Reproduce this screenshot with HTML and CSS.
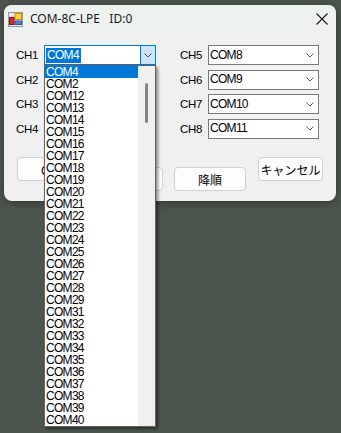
FILE: index.html
```html
<!DOCTYPE html>
<html lang="ja">
<head>
    <meta charset="UTF-8">
    <meta name="viewport" content="width=device-width, initial-scale=1.0">
    <title>COM-8C-LPE</title>
    <link rel="stylesheet" href="styles.css">
</head>
<body>
    <div class="window">
        <div class="titlebar">
            <svg class="app-icon" width="15" height="15" viewBox="0 0 15 15">
                <rect x="0.5" y="0.5" width="14" height="14" fill="#e8e8e8" stroke="#9a9a9a"/>
                <rect x="7" y="1.5" width="6.5" height="6" fill="#ffd83a" stroke="#d08a10"/>
                <rect x="1.5" y="5.5" width="4.5" height="7" fill="#d8262c" stroke="#8a1a1a"/>
                <rect x="7" y="9" width="6.5" height="3.5" fill="#4a86d8" stroke="#2a5aa8"/>
            </svg>
            <span class="title">COM-8C-LPE&nbsp;&nbsp;&nbsp;ID:0</span>
            <svg class="close" width="12" height="12" viewBox="0 0 12 12">
                <path d="M0.5 0.5 L11.5 11.5 M11.5 0.5 L0.5 11.5" stroke="#1a1a1a" stroke-width="1.1"/>
            </svg>
        </div>

        <div class="content">
            <div class="channels">
                <div class="channel">
                    <span class="ch-label">CH1</span>
                    <div class="combo focused">
                        <span class="combo-text"><span class="selected">COM4</span></span>
                        <span class="combo-btn">
                            <svg width="8" height="5" viewBox="0 0 8 5"><polyline points="0.5,0.5 4,4 7.5,0.5" fill="none" stroke="#505050"/></svg>
                        </span>
                        <div class="droplist">
                            <ul class="items" id="items"></ul>
                            <div class="scrollbar"><div class="thumb"></div></div>
                        </div>
                    </div>
                </div>
                <div class="channel">
                    <span class="ch-label">CH5</span>
                    <div class="combo">
                        <span class="combo-text">COM8</span>
                        <span class="combo-btn">
                            <svg width="8" height="5" viewBox="0 0 8 5"><polyline points="0.5,0.5 4,4 7.5,0.5" fill="none" stroke="#606060"/></svg>
                        </span>
                    </div>
                </div>
                <div class="channel">
                    <span class="ch-label">CH2</span>
                    <div class="combo"></div>
                </div>
                <div class="channel">
                    <span class="ch-label">CH6</span>
                    <div class="combo">
                        <span class="combo-text">COM9</span>
                        <span class="combo-btn">
                            <svg width="8" height="5" viewBox="0 0 8 5"><polyline points="0.5,0.5 4,4 7.5,0.5" fill="none" stroke="#606060"/></svg>
                        </span>
                    </div>
                </div>
                <div class="channel">
                    <span class="ch-label">CH3</span>
                    <div class="combo"></div>
                </div>
                <div class="channel">
                    <span class="ch-label">CH7</span>
                    <div class="combo">
                        <span class="combo-text">COM10</span>
                        <span class="combo-btn">
                            <svg width="8" height="5" viewBox="0 0 8 5"><polyline points="0.5,0.5 4,4 7.5,0.5" fill="none" stroke="#606060"/></svg>
                        </span>
                    </div>
                </div>
                <div class="channel">
                    <span class="ch-label">CH4</span>
                    <div class="combo"></div>
                </div>
                <div class="channel">
                    <span class="ch-label">CH8</span>
                    <div class="combo">
                        <span class="combo-text">COM11</span>
                        <span class="combo-btn">
                            <svg width="8" height="5" viewBox="0 0 8 5"><polyline points="0.5,0.5 4,4 7.5,0.5" fill="none" stroke="#606060"/></svg>
                        </span>
                    </div>
                </div>
            </div>

            <div class="buttons">
                <button class="btn btn-first"><span class="hidden-label">C</span></button>
                <button class="btn btn-low btn-asc"></button>
                <button class="btn btn-low btn-desc">降順</button>
                <button class="btn btn-cancel">キャンセル</button>
            </div>
        </div>
    </div>

    <script>
        // ドロップダウンの項目を作る
        const ports = [4, 2];
        for (let i = 12; i <= 40; i++) {
            if (i !== 30) ports.push(i);
        }
        const items = document.getElementById('items');
        ports.forEach((n, index) => {
            const li = document.createElement('li');
            li.textContent = 'COM' + n;
            if (index === 0) li.className = 'active';
            items.appendChild(li);
        });
    </script>
</body>
</html>
```

FILE: styles.css
```css
html, body {
    height: 100%;
}
body {
    margin: 0;
    background-color: #4b554d;
    font-family: "Liberation Sans", Arial, sans-serif;
}
.window {
    margin: 5px 0 0 4px;
    width: 332px;
    height: 196px;
    background-color: #f0f0f0;
    border-radius: 8px;
    box-shadow: 0 2px 8px rgba(0, 0, 0, 0.35);
    position: relative;
}
.titlebar {
    height: 26px;
    display: flex;
    align-items: center;
    padding-left: 4px;
    background-color: #eef2ef;
    border-radius: 8px 8px 0 0;
}
.app-icon {
    margin-top: 2px;
}
.title {
    margin-left: 7px;
    margin-top: 1px;
    font-family: "Noto Sans", "Open Sans", sans-serif;
    font-size: 12px;
    color: #1a1a1a;
}
.close {
    margin-left: auto;
    margin-right: 8px;
    margin-top: 1px;
}
.content {
    padding: 14px 0 0 12px;
}
.channels {
    display: grid;
    grid-template-columns: 140px 139px;
    column-gap: 24px;
    row-gap: 4.5px;
}
.channel {
    display: flex;
    align-items: center;
    height: 20px;
}
.ch-label {
    width: 28px;
    font-size: 11.5px;
    color: #000;
    letter-spacing: -0.3px;
}
.combo {
    flex: 1;
    height: 20px;
    box-sizing: border-box;
    border: 1px solid #7a7a7a;
    background-color: #fff;
    display: flex;
    align-items: center;
    position: relative;
}
.combo-text {
    flex: 1;
    padding-left: 1px;
    font-size: 12px;
    letter-spacing: -0.7px;
    line-height: 15px;
}
.selected {
    display: inline-block;
    background-color: #0078d7;
    color: #fff;
    padding: 0 2px 0 1px;
    line-height: 15px;
}
.combo-btn {
    width: 16px;
    height: 18px;
    display: flex;
    align-items: center;
    justify-content: center;
}
.focused {
    border-color: #0078d7;
}
.focused .combo-btn {
    width: 16px;
    height: 20px;
    margin: -1px -1px -1px 0;
    box-sizing: border-box;
    border: 1px solid #0078d7;
    background-color: #cce4f7;
}
.droplist {
    position: absolute;
    top: 19px;
    left: -1px;
    width: 112px;
    height: 362px;
    box-sizing: border-box;
    border: 1px solid #646464;
    background-color: #fff;
    box-shadow: 2px 2px 3px rgba(0, 0, 0, 0.45);
    display: flex;
    z-index: 5;
}
.items {
    list-style-type: none;
    margin: 0;
    padding: 0;
    flex: 1;
    overflow: hidden;
}
.items li {
    height: 12px;
    line-height: 12px;
    padding-left: 1px;
    font-size: 12px;
    letter-spacing: -0.7px;
    color: #000;
}
.items li.active {
    background-color: #0078d7;
    color: #fff;
}
.scrollbar {
    width: 17px;
    background-color: #f0f0f0;
    display: flex;
    justify-content: center;
    padding-top: 17px;
}
.thumb {
    width: 3px;
    height: 40px;
    border-radius: 2px;
    background-color: #858585;
}
.buttons {
    display: flex;
    align-items: flex-start;
    margin-top: 18.5px;
}
.btn {
    height: 24px;
    width: 72px;
    padding: 0;
    background-color: #fdfdfd;
    border: 1px solid #d0d0d0;
    border-radius: 4px;
    font-family: "Noto Sans CJK JP", "Noto Sans", sans-serif;
    font-size: 12px;
    color: #000;
}
.btn-first {
    margin-left: 1px;
    text-align: left;
    padding-left: 23px;
}
.hidden-label {
    font-family: "Liberation Sans", Arial, sans-serif;
}
.btn-low {
    margin-top: 10px;
}
.btn-asc {
    margin-left: 2px;
}
.btn-desc {
    margin-left: 11px;
}
.btn-cancel {
    width: 65px;
    margin-left: 12px;
}
```
